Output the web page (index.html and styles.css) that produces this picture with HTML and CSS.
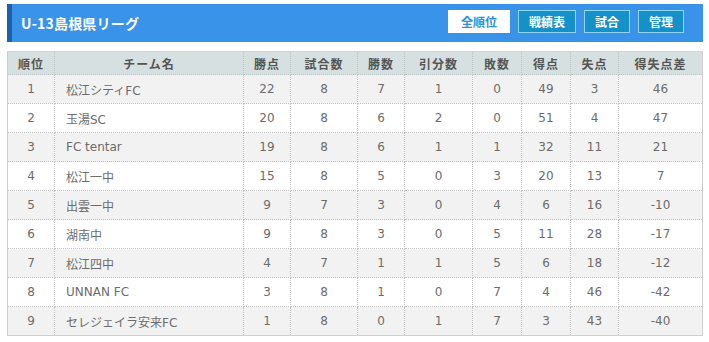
FILE: index.html
```html
<!DOCTYPE html>
<html lang="ja">
<head>
<meta charset="utf-8">
<link rel="stylesheet" href="styles.css">
</head>
<body>
<div class="page">
  <div class="bar">
    <h1 class="title">U-13島根県リーグ</h1>
    <nav class="tabs">
      <a class="tab tab-active">全順位</a>
      <a class="tab">戦績表</a>
      <a class="tab">試合</a>
      <a class="tab">管理</a>
    </nav>
  </div>
  <table class="standings">
    <colgroup>
      <col class="c-rank"><col class="c-team"><col class="c-pts"><col class="c-gp"><col class="c-w"><col class="c-d"><col class="c-l"><col class="c-gf"><col class="c-ga"><col class="c-gd">
    </colgroup>
    <thead>
      <tr><th>順位</th><th>チーム名</th><th>勝点</th><th>試合数</th><th>勝数</th><th>引分数</th><th>敗数</th><th>得点</th><th>失点</th><th>得失点差</th></tr>
    </thead>
    <tbody>
      <tr><td>1</td><td class="team">松江シティFC</td><td>22</td><td>8</td><td>7</td><td>1</td><td>0</td><td>49</td><td>3</td><td>46</td></tr>
      <tr><td>2</td><td class="team">玉湯SC</td><td>20</td><td>8</td><td>6</td><td>2</td><td>0</td><td>51</td><td>4</td><td>47</td></tr>
      <tr><td>3</td><td class="team">FC tentar</td><td>19</td><td>8</td><td>6</td><td>1</td><td>1</td><td>32</td><td>11</td><td>21</td></tr>
      <tr><td>4</td><td class="team">松江一中</td><td>15</td><td>8</td><td>5</td><td>0</td><td>3</td><td>20</td><td>13</td><td>7</td></tr>
      <tr><td>5</td><td class="team">出雲一中</td><td>9</td><td>7</td><td>3</td><td>0</td><td>4</td><td>6</td><td>16</td><td>-10</td></tr>
      <tr><td>6</td><td class="team">湖南中</td><td>9</td><td>8</td><td>3</td><td>0</td><td>5</td><td>11</td><td>28</td><td>-17</td></tr>
      <tr><td>7</td><td class="team">松江四中</td><td>4</td><td>7</td><td>1</td><td>1</td><td>5</td><td>6</td><td>18</td><td>-12</td></tr>
      <tr><td>8</td><td class="team">UNNAN FC</td><td>3</td><td>8</td><td>1</td><td>0</td><td>7</td><td>4</td><td>46</td><td>-42</td></tr>
      <tr><td>9</td><td class="team">セレジェイラ安来FC</td><td>1</td><td>8</td><td>0</td><td>1</td><td>7</td><td>3</td><td>43</td><td>-40</td></tr>
    </tbody>
  </table>
</div>
</body>
</html>
```
FILE: styles.css
```css
html, body {
  margin: 0;
  padding: 0;
  background: #ffffff;
}
body {
  font-family: "DejaVu Sans", "Noto Sans CJK JP", sans-serif;
  color: #6c6c6c;
}
.page {
  padding: 4px 6px 0 7px;
}
.bar {
  display: flex;
  align-items: center;
  justify-content: space-between;
  height: 38px;
  box-sizing: border-box;
  background: #3893e9;
  border-left: 5px solid #1b62ae;
  padding: 0 19px 0 9px;
}
.title {
  margin: 0;
  font-family: "Noto Sans CJK JP", sans-serif;
  font-size: 14px;
  font-weight: 700;
  color: #ffffff;
  letter-spacing: 0.2px;
}
.tabs {
  display: flex;
  gap: 8px;
  margin-top: -3px;
}
.tab {
  display: flex;
  align-items: center;
  justify-content: center;
  height: 23px;
  box-sizing: border-box;
  padding: 0 10px;
  background: #1491c9;
  border: 1px solid #8fd6f2;
  color: #ffffff;
  font-family: "Noto Sans CJK JP", sans-serif;
  font-size: 12px;
  font-weight: 700;
}
.tab-active {
  background: #ffffff;
  border-color: #ffffff;
  color: #2d8fd6;
  padding: 0 12px;
}
.standings {
  margin-top: 9px;
  width: 695px;
  table-layout: fixed;
  border-collapse: collapse;
  border: 1px solid #cfcfcf;
  font-size: 12px;
}
.c-rank { width: 47px; }
.c-team { width: 189px; }
.c-pts { width: 47px; }
.c-gp { width: 67px; }
.c-w { width: 47px; }
.c-d { width: 68px; }
.c-l { width: 49px; }
.c-gf { width: 49px; }
.c-ga { width: 48px; }
.c-gd { width: 84px; }
.standings th {
  height: 22px;
  padding: 0;
  background: #d6e0e0;
  color: #555555;
  font-family: "Noto Sans CJK JP", sans-serif;
  font-size: 12px;
  font-weight: 700;
  text-align: center;
  border: 1px dotted #bcc6c6;
  border-top: 1px solid #cfd6d6;
  letter-spacing: 1px;
}
.standings td {
  height: 28px;
  padding: 0;
  text-align: center;
  border: 1px dotted #c4c4c4;
  color: #6c6c6c;
}
.standings tbody tr:nth-child(odd) td {
  background: #f2f2f2;
}
.standings td.team {
  text-align: left;
  padding-left: 11px;
}
```
